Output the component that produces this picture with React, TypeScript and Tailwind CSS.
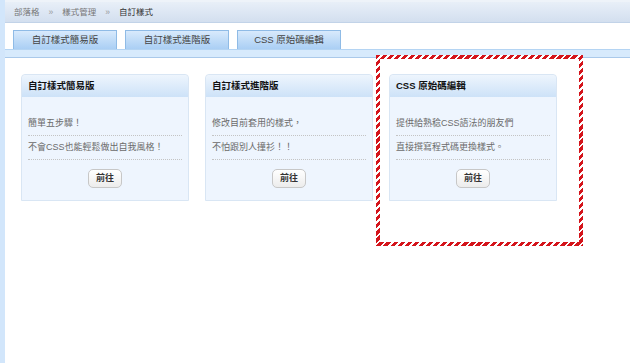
import React from "react";

interface Panel {
  title: string;
  lines: string[];
}

const panels: Panel[] = [
  { title: "自訂樣式簡易版", lines: ["簡單五步驟！", "不會CSS也能輕鬆做出自我風格！"] },
  { title: "自訂樣式進階版", lines: ["修改目前套用的樣式，", "不怕跟別人撞衫！！"] },
  { title: "CSS 原始碼編輯", lines: ["提供給熟稔CSS語法的朋友們", "直接撰寫程式碼更換樣式。"] },
];

const tabs = ["自訂樣式簡易版", "自訂樣式進階版", "CSS 原始碼編輯"];

const font = "font-['Liberation_Sans','Noto_Sans_CJK_TC',sans-serif]";

const Card = ({ title, lines }: Panel) => {
  return (
    <div className="w-[168px] h-[127px] flex flex-col rounded-t-[4px] border border-[#d9e6f4] bg-[#eef5fe]">
      <div className="h-[22px] flex items-center px-[6px] rounded-t-[4px] bg-gradient-to-b from-[#eef5fd] to-[#cde2f8] text-[9.5px] font-bold text-[#111]">
        {title}
      </div>
      <div className="flex flex-col px-[6px] pt-[15px]">
        {lines.map((l, i) => (
          <div
            key={i}
            className="h-[24px] flex items-center text-[9px] text-[#6b6b6b] border-b border-dotted border-[#c4c4c4]"
          >
            {l}
          </div>
        ))}
        <div className="flex justify-center pt-[9px]">
          <button className="w-[34px] h-[19px] flex items-center justify-center rounded-[5px] border border-[#c7c7c7] bg-gradient-to-b from-[#ffffff] to-[#ececec] text-[9px] font-bold text-[#333]">
            前往
          </button>
        </div>
      </div>
    </div>
  );
};

export default function App() {
  return (
    <div className={`relative w-[630px] h-[363px] flex bg-white overflow-hidden ${font}`}>
      <div className="w-[5px] h-full bg-[#d2e6fb]" />
      <div className="flex-1 flex flex-col">
        <div className="h-[23px] flex items-center pl-[9px] gap-[9px] border-t-[2px] border-t-[#eef3f9] border-b border-b-[#c2d3e8] bg-gradient-to-b from-[#e8eff8] to-[#d3dfef] text-[8.5px] text-[#777]">
          <span>部落格</span>
          <span className="text-[#999]">»</span>
          <span>樣式管理</span>
          <span className="text-[#999]">»</span>
          <span className="text-[#333]">自訂樣式</span>
        </div>
        <div className="flex gap-[8px] pl-[8px] pt-[7px]">
          {tabs.map((t, i) => (
            <div
              key={i}
              className="w-[104px] h-[19px] flex items-center justify-center border border-[#8fbbe6] border-b-0 bg-gradient-to-b from-[#d8eafc] to-[#aacff4] text-[9.5px] text-[#444]"
            >
              {t}
            </div>
          ))}
        </div>
        <div className="h-[9px] bg-[#d7eafc] border-t border-[#b4d4f3] border-b border-b-[#aac9ea]" />
        <div className="flex gap-[16px] pl-[16px] pt-[16px]">
          {panels.map((p, i) => (
            <Card key={i} {...p} />
          ))}
        </div>
      </div>
      {/* red annotation frame */}
      <div className="absolute left-[376px] top-[55px] w-[207px] h-[191px] border-[4px] border-solid [border-image:repeating-linear-gradient(135deg,#d4141b_0px,#d4141b_3px,#ffffff_3px,#ffffff_5px)_4]" />
    </div>
  );
}
